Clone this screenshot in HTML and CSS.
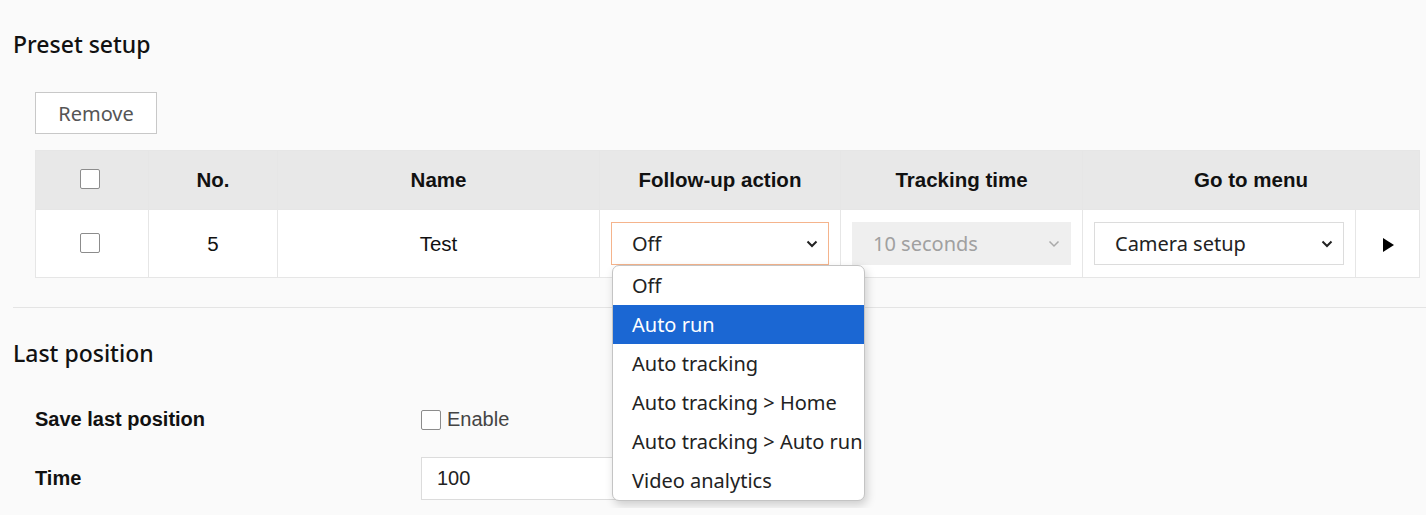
FILE: index.html
```html
<!DOCTYPE html>
<html lang="en">
<head>
  <meta charset="UTF-8" />
  <title>Preset setup</title>
  <link rel="stylesheet" href="styles.css">
</head>
<body>
  <div class="page">
    <section class="section">
      <h2 class="section-title">Preset setup</h2>
      <div class="toolbar">
        <button type="button" class="btn">Remove</button>
      </div>
      <table class="preset-table">
        <colgroup>
          <col style="width:113px">
          <col style="width:129px">
          <col style="width:322px">
          <col style="width:241px">
          <col style="width:242px">
          <col style="width:273px">
          <col style="width:64px">
        </colgroup>
        <thead>
          <tr>
            <th><span class="check"></span></th>
            <th>No.</th>
            <th>Name</th>
            <th>Follow-up action</th>
            <th>Tracking time</th>
            <th colspan="2">Go to menu</th>
          </tr>
        </thead>
        <tbody>
          <tr>
            <td><span class="check"></span></td>
            <td>5</td>
            <td>Test</td>
            <td class="sel-cell">
              <div class="select select-focus">
                <span>Off</span>
                <svg class="chev" width="12" height="8" viewBox="0 0 12 8"><path d="M1.5 1.5 L6 6 L10.5 1.5" fill="none" stroke="#222" stroke-width="2"/></svg>
              </div>
              <ul class="dropdown">
                <li>Off</li>
                <li class="active">Auto run</li>
                <li>Auto tracking</li>
                <li>Auto tracking &gt; Home</li>
                <li>Auto tracking &gt; Auto run</li>
                <li>Video analytics</li>
              </ul>
            </td>
            <td class="sel-cell">
              <div class="select select-disabled">
                <span>10 seconds</span>
                <svg class="chev" width="12" height="8" viewBox="0 0 12 8"><path d="M1.5 1.5 L6 6 L10.5 1.5" fill="none" stroke="#aaa" stroke-width="1.5"/></svg>
              </div>
            </td>
            <td class="sel-cell">
              <div class="select">
                <span>Camera setup</span>
                <svg class="chev" width="12" height="8" viewBox="0 0 12 8"><path d="M1.5 1.5 L6 6 L10.5 1.5" fill="none" stroke="#222" stroke-width="2"/></svg>
              </div>
            </td>
            <td>
              <svg width="12" height="14" viewBox="0 0 12 14"><path d="M1 0 L12 7 L1 14 Z" fill="#000"/></svg>
            </td>
          </tr>
        </tbody>
      </table>
    </section>

    <hr class="divider">

    <section class="section">
      <h2 class="section-title">Last position</h2>
      <div class="form-row">
        <div class="form-label">Save last position</div>
        <label class="form-control check-label"><span class="check"></span>Enable</label>
      </div>
      <div class="form-row">
        <div class="form-label">Time</div>
        <div class="form-control">
          <div class="text-input">100</div>
        </div>
      </div>
    </section>
  </div>
</body>
</html>
```

FILE: styles.css
```css
* {
    margin: 0;
    padding: 0;
    box-sizing: border-box;
}
body {
    background: #fafafa;
    font-family: 'Noto Sans', 'Open Sans', sans-serif;
    color: #222;
    overflow: hidden;
}
.page {
    padding: 29px 0 0 13px;
}
.section-title {
    font-size: 23px;
    font-weight: 500;
    line-height: 30px;
    color: #111;
}
.toolbar {
    padding: 33px 0 16px 22px;
}
.btn {
    width: 122px;
    height: 42px;
    background: #fff;
    border: 1px solid #c8c8c8;
    font-family: 'Noto Sans', sans-serif;
    font-size: 20px;
    color: #555;
}

/* tabla */
.preset-table {
    margin-left: 22px;
    border-collapse: collapse;
    table-layout: fixed;
    width: 1384px;
    font-family: 'Liberation Sans', Arial, sans-serif;
    font-size: 20.5px;
    color: #111;
}
.preset-table th,
.preset-table td {
    border: 1px solid #e6e6e6;
    text-align: center;
    vertical-align: middle;
}
.preset-table th {
    background: #e8e8e8;
    height: 59px;
    font-weight: bold;
}
.preset-table td {
    background: #fff;
    height: 68px;
}
.preset-table td svg {
    vertical-align: middle;
}
.preset-table th:first-child,
.preset-table td:first-child {
    padding-right: 5px;
}
.check {
    display: inline-block;
    width: 20px;
    height: 20px;
    background: #fff;
    border: 1px solid #8c8c8c;
    border-radius: 2px;
    vertical-align: middle;
}
.preset-table thead .check {
    margin-top: -6px;
}
.preset-table tbody .check {
    margin-top: -4px;
}
.sel-cell {
    position: relative;
    padding: 0 11px;
}
.select {
    display: flex;
    align-items: center;
    justify-content: space-between;
    height: 43px;
    padding: 0 10px 0 20px;
    border: 1px solid #dcdcdc;
    background: #fff;
    font-family: 'Noto Sans', sans-serif;
    font-size: 20px;
    color: #222;
    text-align: left;
}
.select-focus {
    border-color: #f5b48c;
}
.select-disabled {
    background: #efefef;
    border-color: #efefef;
    color: #a0a0a0;
}

/* menu desplegable */
.dropdown {
    position: absolute;
    left: 12px;
    top: 55px;
    width: 253px;
    list-style: none;
    background: #fff;
    border: 1px solid #c4c4c4;
    border-radius: 7px;
    overflow: hidden;
    box-shadow: 2px 4px 10px rgba(0, 0, 0, 0.18);
    z-index: 10;
    text-align: left;
    font-family: 'Noto Sans', sans-serif;
    font-size: 20px;
    color: #222;
}
.dropdown li {
    height: 39px;
    line-height: 39px;
    padding-left: 19px;
    white-space: nowrap;
}
.dropdown li.active {
    background: #1b67d3;
    color: #fff;
}

.divider {
    border: none;
    border-top: 1px solid #e4e4e4;
    margin: 29px 0 30px;
}

/* formulario */
.form-row {
    display: flex;
    align-items: center;
    height: 59px;
    padding-left: 22px;
    font-family: 'Liberation Sans', Arial, sans-serif;
    font-size: 20px;
}
.section-title + .form-row {
    margin-top: 22px;
}
.form-label {
    width: 386px;
    font-weight: bold;
    color: #111;
}
.check-label {
    display: flex;
    align-items: center;
    gap: 6px;
    color: #444;
}
.text-input {
    width: 290px;
    height: 43px;
    line-height: 41px;
    padding-left: 15px;
    background: #fff;
    border: 1px solid #dcdcdc;
    color: #222;
}
```
